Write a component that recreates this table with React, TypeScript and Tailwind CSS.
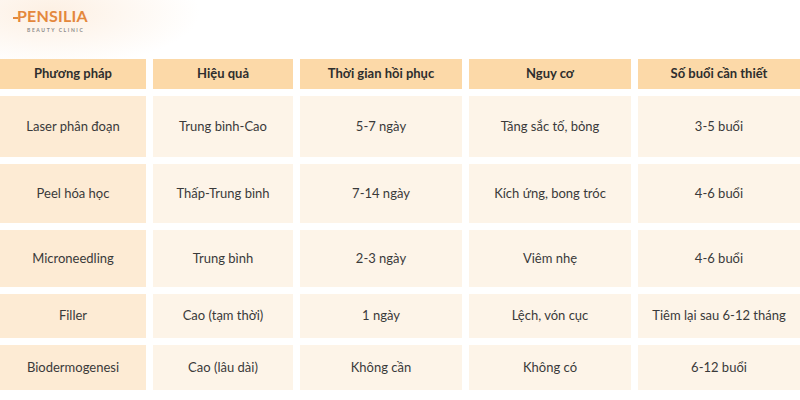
import React from 'react';

const headers = ['Phương pháp', 'Hiệu quả', 'Thời gian hồi phục', 'Nguy cơ', 'Số buổi cần thiết'];

const rows: string[][] = [
  ['Laser phân đoạn', 'Trung bình-Cao', '5-7 ngày', 'Tăng sắc tố, bỏng', '3-5 buổi'],
  ['Peel hóa học', 'Thấp-Trung bình', '7-14 ngày', 'Kích ứng, bong tróc', '4-6 buổi'],
  ['Microneedling', 'Trung bình', '2-3 ngày', 'Viêm nhẹ', '4-6 buổi'],
  ['Filler', 'Cao (tạm thời)', '1 ngày', 'Lệch, vón cục', 'Tiêm lại sau 6-12 tháng'],
  ['Biodermogenesi', 'Cao (lâu dài)', 'Không cần', 'Không có', '6-12 buổi'],
];

const App: React.FC = () => {
  return (
    <div
      className="w-[800px] h-[400px] bg-white overflow-hidden text-[#333]"
      style={{ fontFamily: 'Lato, "Noto Sans", sans-serif' }}
    >
      {/* Logo */}
      <div className="h-[59px] bg-[radial-gradient(ellipse_150px_55px_at_50px_12px,#fdf0e3,#ffffff)]">
        <div className="pl-[17px] pt-[6px] flex flex-col items-start">
          <div className="relative text-[16px] font-bold tracking-[0.2px] text-[#e4883c] leading-[20px]">
            <span className="absolute left-[-4px] top-[11px] w-[5px] h-[2px] bg-[#e4883c]" />
            PENSILIA
          </div>
          <div className="ml-[10px] text-[5px] font-bold tracking-[1.6px] text-[#8a8a8a] leading-[8px]">
            BEAUTY CLINIC
          </div>
        </div>
      </div>

      {/* Table */}
      <div className="grid grid-cols-[146px_140px_162px_162px_162px] grid-rows-[30px_61px_59px_57px_44px_45px] gap-x-[7px] gap-y-[7px]">
        {headers.map((h) => (
          <div
            key={h}
            className="bg-[#fcd9a8] flex items-center justify-center text-[13px] font-bold text-[#2e2e2e]"
          >
            {h}
          </div>
        ))}
        {rows.map((r) =>
          r.map((c, i) => (
            <div
              key={r[0] + i}
              className={
                (i === 0 ? 'bg-[#fdebd4]' : 'bg-[#fdf4e8]') +
                ' flex items-center justify-center text-[13px] text-[#3a3a3a]'
              }
            >
              {c}
            </div>
          ))
        )}
      </div>
    </div>
  );
};

export default App;
